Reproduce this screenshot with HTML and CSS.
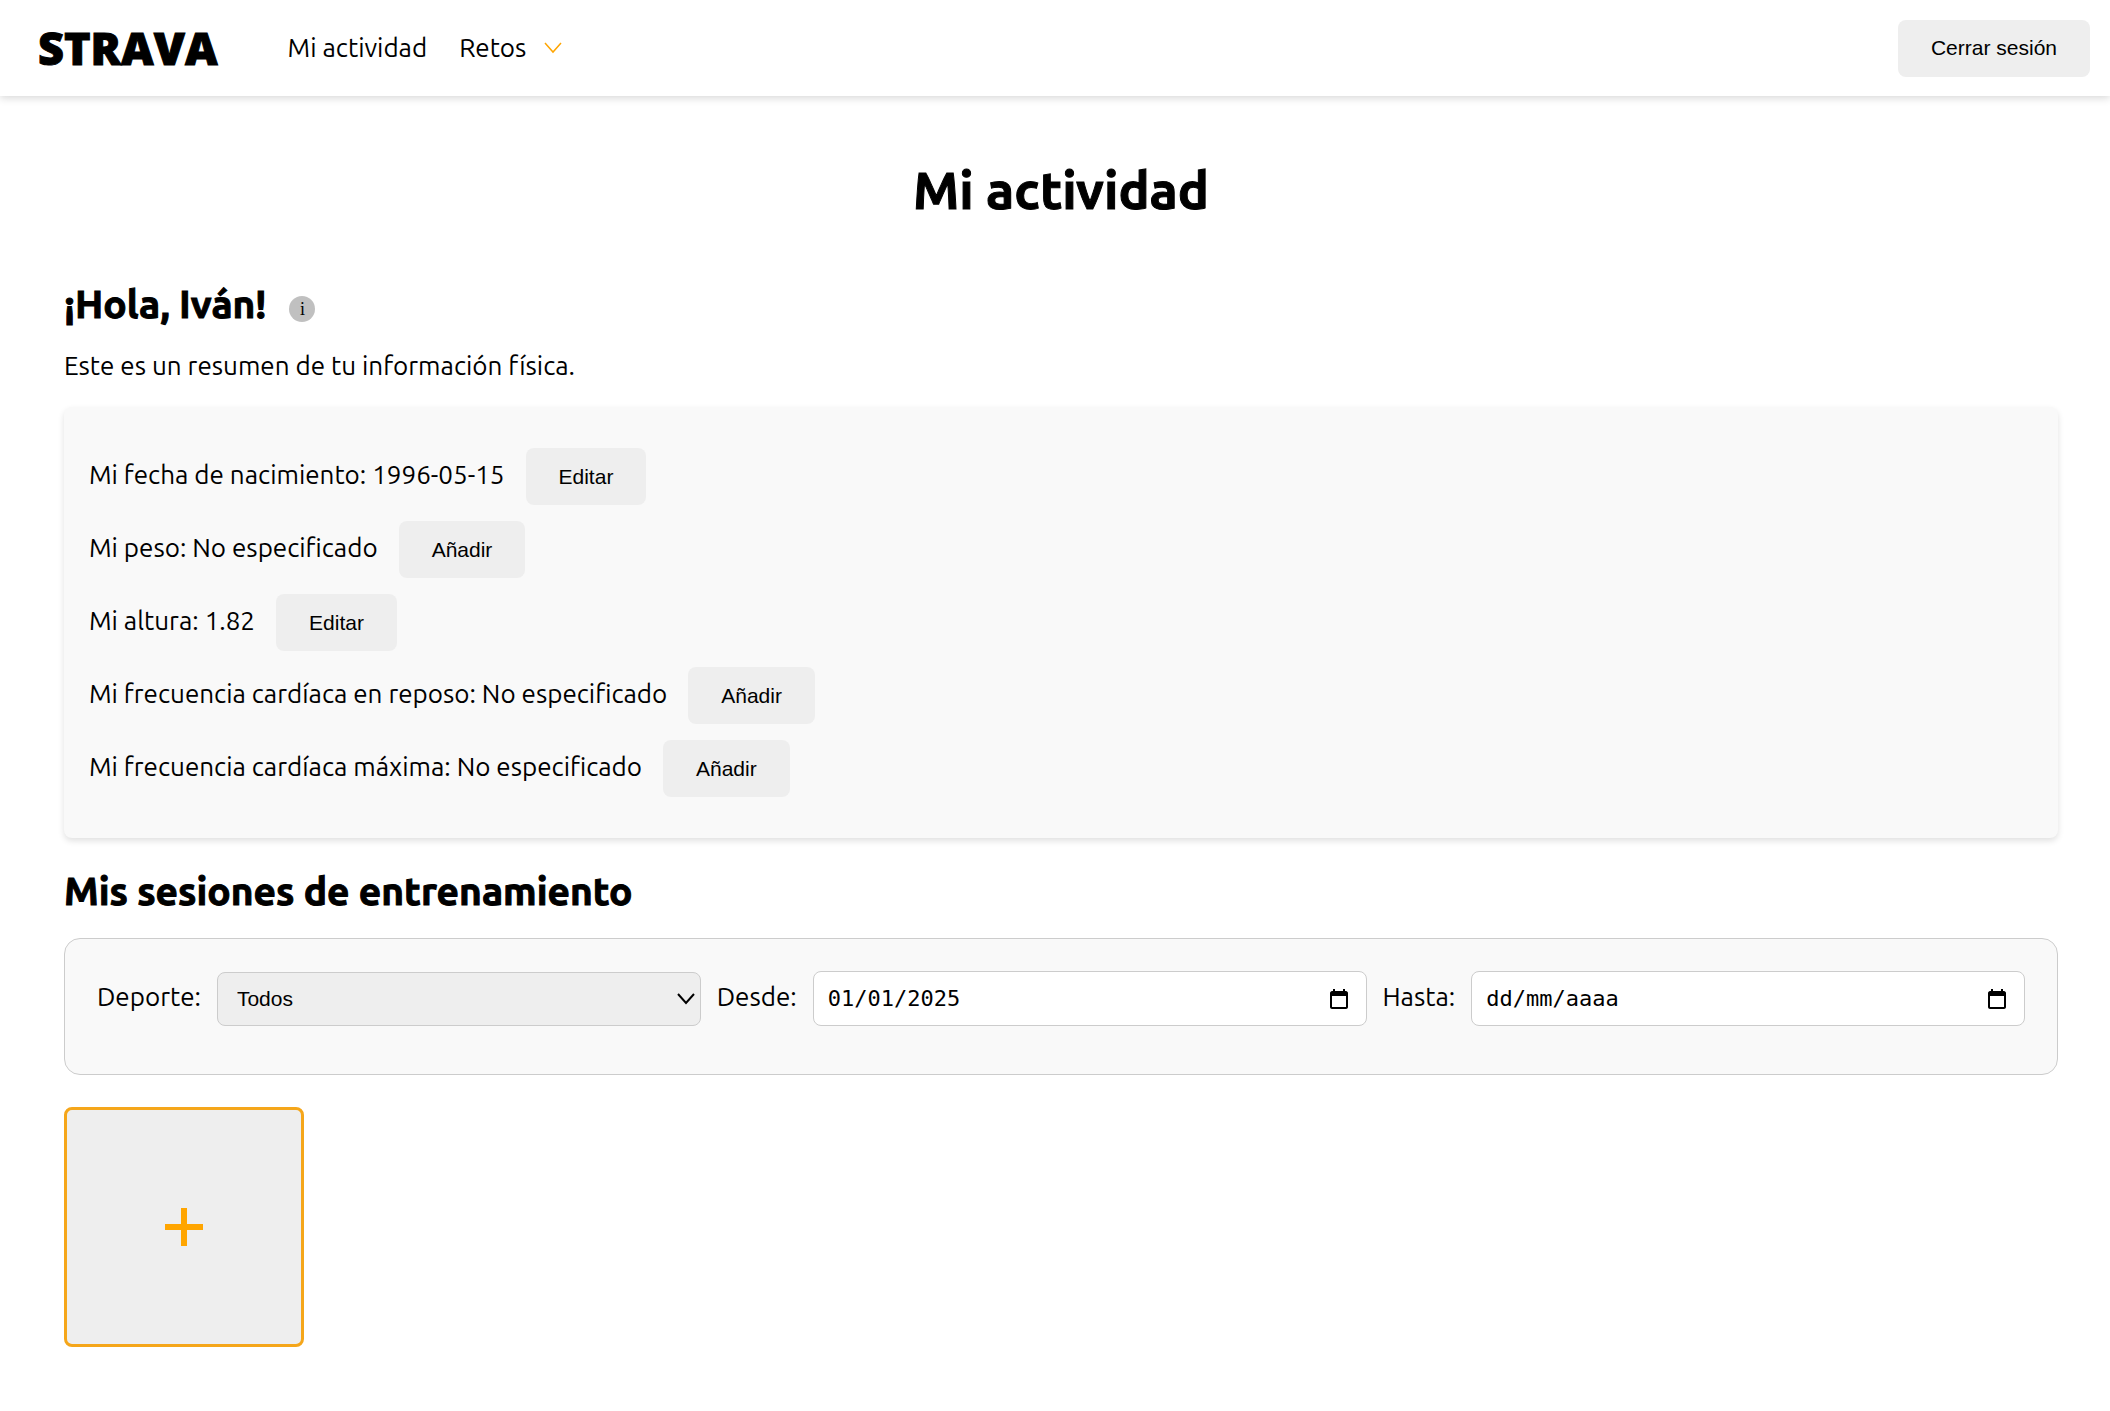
FILE: index.html
```html
<!DOCTYPE html>
<html lang="es">
<head>
<meta charset="utf-8">
<meta name="viewport" content="width=device-width, initial-scale=1">
<title>Mi actividad</title>
<link rel="stylesheet" href="styles.css">
</head>
<body>
<header class="topbar">
  <a class="logo" href="#">STRAVA</a>
  <nav class="nav">
    <a class="nav-link" href="#">Mi actividad</a>
    <a class="nav-link" href="#">Retos
      <svg class="chevron" viewBox="0 0 18 12" aria-hidden="true"><path d="M1 1l8 9 8-9"/></svg>
    </a>
  </nav>
  <button class="btn" type="button">Cerrar sesión</button>
</header>

<main class="page">
  <h1 class="title">Mi actividad</h1>

  <section>
    <div class="greeting">
      <h2 class="heading">¡Hola, Iván!</h2>
      <button class="info" type="button" aria-label="Información">i</button>
    </div>
    <p class="intro">Este es un resumen de tu información física.</p>
    <ul class="card">
      <li class="fact"><span>Mi fecha de nacimiento: 1996-05-15</span><button class="btn" type="button">Editar</button></li>
      <li class="fact"><span>Mi peso: No especificado</span><button class="btn" type="button">Añadir</button></li>
      <li class="fact"><span>Mi altura: 1.82</span><button class="btn" type="button">Editar</button></li>
      <li class="fact"><span>Mi frecuencia cardíaca en reposo: No especificado</span><button class="btn" type="button">Añadir</button></li>
      <li class="fact"><span>Mi frecuencia cardíaca máxima: No especificado</span><button class="btn" type="button">Añadir</button></li>
    </ul>
  </section>

  <section>
    <h2 class="heading">Mis sesiones de entrenamiento</h2>
    <form class="filters">
      <label class="filter-label" for="sport">Deporte:</label>
      <div class="select-wrap">
        <select class="select" id="sport"><option>Todos</option></select>
        <svg class="select-arrow" viewBox="0 0 18 12" aria-hidden="true"><path d="M1 1l8 9 8-9"/></svg>
      </div>
      <label class="filter-label" for="from">Desde:</label>
      <div class="date">
        <input class="date-input" id="from" type="text" value="01/01/2025" placeholder="dd/mm/aaaa">
        <button class="date-button" type="button" aria-label="Abrir calendario">
          <svg class="calendar" viewBox="0 0 18 20" aria-hidden="true"><path d="M16 2h-1V0h-2v2H5V0H3v2H2C1 2 0 3 0 4v14c0 1 1 2 2 2h14c1 0 2-1 2-2V4c0-1-1-2-2-2zm0 16H2V7h14z"/></svg>
        </button>
      </div>
      <label class="filter-label" for="to">Hasta:</label>
      <div class="date">
        <input class="date-input" id="to" type="text" placeholder="dd/mm/aaaa">
        <button class="date-button" type="button" aria-label="Abrir calendario">
          <svg class="calendar" viewBox="0 0 18 20" aria-hidden="true"><path d="M16 2h-1V0h-2v2H5V0H3v2H2C1 2 0 3 0 4v14c0 1 1 2 2 2h14c1 0 2-1 2-2V4c0-1-1-2-2-2zm0 16H2V7h14z"/></svg>
        </button>
      </div>
    </form>
    <button class="add" type="button" aria-label="Añadir sesión">
      <svg class="plus" viewBox="0 0 38 38" aria-hidden="true"><path d="M19 0v38M0 19h38"/></svg>
    </button>
  </section>
</main>
</body>
</html>
```
FILE: styles.css
```css
* { box-sizing: border-box; }

body {
  margin: 0;
  background: #fff;
  color: #000;
  font-family: Ubuntu, "Noto Sans", sans-serif;
  font-size: 26px;
  line-height: 32px;
}

.topbar {
  display: flex;
  align-items: center;
  height: 96px;
  padding: 0 20px 0 38px;
  box-shadow: 0 2px 8px rgba(0, 0, 0, 0.16);
}

.logo {
  color: #000;
  font-family: "Open Sans", sans-serif;
  font-size: 45px;
  font-weight: 800;
  line-height: 48px;
  text-decoration: none;
  -webkit-text-stroke: 1px #000;
}

.nav {
  display: flex;
  flex: 1;
  gap: 32px;
  margin-left: 70px;
}

.nav-link {
  display: flex;
  align-items: center;
  gap: 18px;
  color: #000;
  text-decoration: none;
}

.chevron, .select-arrow {
  width: 18px;
  height: 12px;
  fill: none;
  stroke: #ffa500;
  stroke-width: 1.5;
}

.btn {
  height: 57px;
  padding: 0 33px;
  border: 0;
  border-radius: 8px;
  background: #eee;
  color: #000;
  font-family: "Liberation Sans", Arial, sans-serif;
  font-size: 21px;
}

.page { padding: 59px 52px 64px 64px; }

.title {
  margin: 0 0 48px;
  font-size: 52px;
  font-weight: 700;
  line-height: 70px;
  text-align: center;
  -webkit-text-stroke: 1px #000;
}

.greeting {
  display: flex;
  align-items: center;
  gap: 23px;
}

.heading {
  margin: 0;
  font-size: 39px;
  font-weight: 700;
  line-height: 62px;
  -webkit-text-stroke: 1px #000;
}

.info {
  width: 26px;
  height: 26px;
  margin-top: 10px;
  padding: 0;
  border: 0;
  border-radius: 50%;
  background: #c0c0c0;
  font-family: "Liberation Serif", serif;
  font-size: 18px;
  line-height: 26px;
}

.intro { margin: 15px 0 25px; }

.card {
  display: grid;
  gap: 16px;
  margin: 0 0 22px;
  padding: 41px 25px;
  border-radius: 8px;
  background: #f9f9f9;
  box-shadow: 0 3px 6px rgba(0, 0, 0, 0.12);
  list-style: none;
}

.fact {
  display: flex;
  align-items: baseline;
  gap: 21px;
}

.filters {
  display: flex;
  align-items: center;
  gap: 16px;
  margin: 16px 0 32px;
  padding: 32px 32px 48px;
  border: 1px solid #ccc;
  border-radius: 16px;
  background: #f9f9f9;
}

.filter-label { margin-bottom: 3px; }

.select-wrap {
  display: grid;
  flex: 1 1 484px;
  align-items: center;
}

.select {
  grid-area: 1 / 1;
  width: 100%;
  height: 54px;
  padding: 0 19px;
  border: 1px solid #ccc;
  border-radius: 8px;
  appearance: none;
  background: #eee;
  color: #000;
  font-family: "Liberation Sans", Arial, sans-serif;
  font-size: 21px;
}

.select-arrow {
  grid-area: 1 / 1;
  justify-self: end;
  margin-right: 6px;
  stroke: #000;
  stroke-width: 2;
  pointer-events: none;
}

.date {
  display: flex;
  flex: 1 1 554px;
  align-items: center;
  height: 55px;
  padding: 0 18px 0 14px;
  border: 1px solid #ccc;
  border-radius: 8px;
  background: #fff;
}

.date-input {
  flex: 1;
  min-width: 0;
  padding: 0;
  border: 0;
  background: none;
  color: #000;
  font-family: "DejaVu Sans Mono", monospace;
  font-size: 22px;
}

.date-input::placeholder { color: #000; }

.date-button {
  display: flex;
  padding: 0;
  border: 0;
  background: none;
}

.calendar {
  width: 18px;
  height: 20px;
}

.add {
  display: grid;
  place-items: center;
  width: 240px;
  height: 240px;
  padding: 0;
  border: 3px solid #f5a61a;
  border-radius: 8px;
  background: #eee;
}

.plus {
  width: 38px;
  height: 38px;
  fill: none;
  stroke: #ffa500;
  stroke-width: 6;
}
```
